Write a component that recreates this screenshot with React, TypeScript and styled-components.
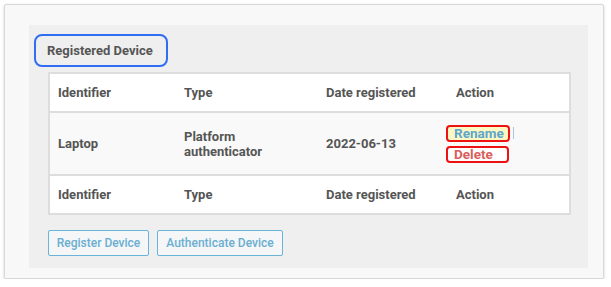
import React from 'react';
import styled, { createGlobalStyle } from 'styled-components';

const GlobalStyle = createGlobalStyle`
  html, body {
    margin: 0;
    padding: 0;
    background: #ffffff;
  }
  body {
    font-family: Roboto, "Liberation Sans", sans-serif;
  }
`;

const Card = styled.div`
  margin: 4px 0 0 4px;
  width: 600px;
  height: 275px;
  box-sizing: border-box;
  background: #f8f8f8;
  border: 1px solid #d8d8d8;
  border-radius: 2px;
  box-shadow: 0 1px 3px rgba(0, 0, 0, 0.18);
  padding: 20px 15px 14px 24px;
`;

const Panel = styled.div`
  background: #efefef;
  padding: 9px 18px 12px 5px;
  box-sizing: border-box;
`;

const Title = styled.div`
  display: inline-block;
  box-sizing: border-box;
  height: 33px;
  padding: 0 13px 0 11px;
  line-height: 29px;
  border: 2px solid #2f6df2;
  border-radius: 8px;
  font-size: 13px;
  font-weight: 700;
  color: #555555;
`;

const Table = styled.table`
  margin: 5px 0 0 14px;
  width: 523px;
  border-collapse: collapse;
  border: 2px solid #dddddd;
  table-layout: fixed;
`;

const Row = styled.tr<{ $shade?: boolean }>`
  background: ${(p) => (p.$shade ? '#f9f9f9' : '#ffffff')};
  border-bottom: 2px solid #dddddd;
`;

const Cell = styled.td<{ $tall?: boolean; $tight?: boolean }>`
  height: ${(p) => (p.$tall ? '61px' : '36px')};
  padding-top: 0;
  padding-right: 8px;
  padding-bottom: ${(p) => (p.$tall ? '0' : '1px')};
  padding-left: ${(p) => (p.$tight ? '0' : '8px')};
  font-size: 13px;
  font-weight: 700;
  line-height: 15px;
  color: #555555;
  text-align: left;
  vertical-align: middle;
`;

const Actions = styled.div`
  display: flex;
  flex-direction: column;
  align-items: flex-start;
  gap: 4px;
  margin-left: -2px;
`;

const ActionLink = styled.span<{ $tone: 'rename' | 'delete' }>`
  display: inline-flex;
  align-items: center;
  box-sizing: border-box;
  height: 17px;
  width: ${(p) => (p.$tone === 'rename' ? '64px' : '63px')};
  padding-left: 6px;
  border: 2px solid #ee1111;
  border-radius: 4px;
  background: ${(p) => (p.$tone === 'rename' ? '#fbf7c3' : '#ffffff')};
  color: ${(p) => (p.$tone === 'rename' ? '#5ea6cc' : '#d9605c')};
  font-size: 13.5px;
  font-weight: 700;
`;

const Caret = styled.span`
  display: inline-block;
  width: 1px;
  height: 12px;
  margin-left: 3px;
  background: #a9c6dc;
`;

const RenameLine = styled.div`
  display: flex;
  align-items: center;
`;

const ButtonRow = styled.div`
  display: flex;
  gap: 8px;
  margin: 15px 0 0 14px;
`;

const Button = styled.button<{ $w: number }>`
  width: ${(p) => p.$w}px;
  height: 26px;
  box-sizing: border-box;
  background: #f4f6f7;
  border: 1.5px solid #6ab3d9;
  border-radius: 2px;
  color: #6aaed2;
  font-family: Roboto, "Liberation Sans", sans-serif;
  font-size: 12px;
  font-weight: 500;
  padding: 0;
  cursor: pointer;
`;

const HeaderRow: React.FC = () => (
  <Row>
    <Cell>Identifier</Cell>
    <Cell>Type</Cell>
    <Cell>Date registered</Cell>
    <Cell>Action</Cell>
  </Row>
);

export default function App() {
  return (
    <>
      <GlobalStyle />
      <Card>
        <Panel>
          <Title>Registered Device</Title>
          <Table>
            <colgroup>
              <col style={{ width: 127 }} />
              <col style={{ width: 142 }} />
              <col style={{ width: 130 }} />
              <col />
            </colgroup>
            <tbody>
              <HeaderRow />
              <Row $shade>
                <Cell $tall>Laptop</Cell>
                <Cell $tall>Platform authenticator</Cell>
                <Cell $tall>2022-06-13</Cell>
                <Cell $tall $tight>
                  <Actions>
                    <RenameLine>
                      <ActionLink $tone="rename">Rename</ActionLink>
                      <Caret />
                    </RenameLine>
                    <ActionLink $tone="delete">Delete</ActionLink>
                  </Actions>
                </Cell>
              </Row>
              <HeaderRow />
            </tbody>
          </Table>
          <ButtonRow>
            <Button $w={101}>Register Device</Button>
            <Button $w={126}>Authenticate Device</Button>
          </ButtonRow>
        </Panel>
      </Card>
    </>
  );
}
